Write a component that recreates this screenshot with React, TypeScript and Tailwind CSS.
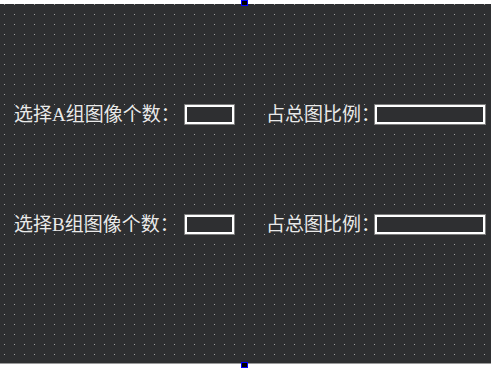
import type { ReactNode } from 'react';

const FONT = "font-['Liberation_Serif','Noto_Sans_CJK_SC',serif]";

function Field({ w }: { w: string }) {
  return (
    <div className={`${w} h-[21px] shrink-0 border border-[#7c7c7c] bg-[#2e2f31] shadow-[inset_0_0_0_2px_#ffffff]`} />
  );
}

function Row({ group }: { group: ReactNode }) {
  return (
    <div className="relative flex h-[21px] items-center pl-[14px]">
      <span className="w-[170px] shrink-0 whitespace-nowrap">选择{group}组图像个数：</span>
      <Field w="w-[51px]" />
      <span className="ml-[31px] w-[108px] shrink-0 whitespace-nowrap">占总图比例：</span>
      <Field w="w-[112px]" />
    </div>
  );
}

// resize handle of the selected form
function Handle({ pos }: { pos: string }) {
  return <div className={`absolute left-[241px] h-[6px] w-[7px] border border-[#0000ff] bg-black ${pos}`} />;
}

export default function App() {
  return (
    <div className={`relative h-[368px] w-[491px] bg-white ${FONT} text-[19px] leading-none text-[#e9e9e9]`}>
      <div className="flex h-full flex-col pt-[4px] pb-[4px]">
        <div className="relative flex flex-1 flex-col border-b border-[#9a9a9a] bg-[#2e2f31] pt-[100px]">
          {/* design-time dot grid */}
          <div className="pointer-events-none absolute inset-0 bg-[repeating-linear-gradient(to_right,transparent_0_4px,#a0a0a0_4px_5px,transparent_5px_10px)] [mask-image:repeating-linear-gradient(to_bottom,#000_0_1px,transparent_1px_10px)]" />
          <Row group="A" />
          <div className="h-[89px]" />
          <Row group="B" />
        </div>
      </div>
      <Handle pos="top-0" />
      <Handle pos="bottom-0" />
    </div>
  );
}
